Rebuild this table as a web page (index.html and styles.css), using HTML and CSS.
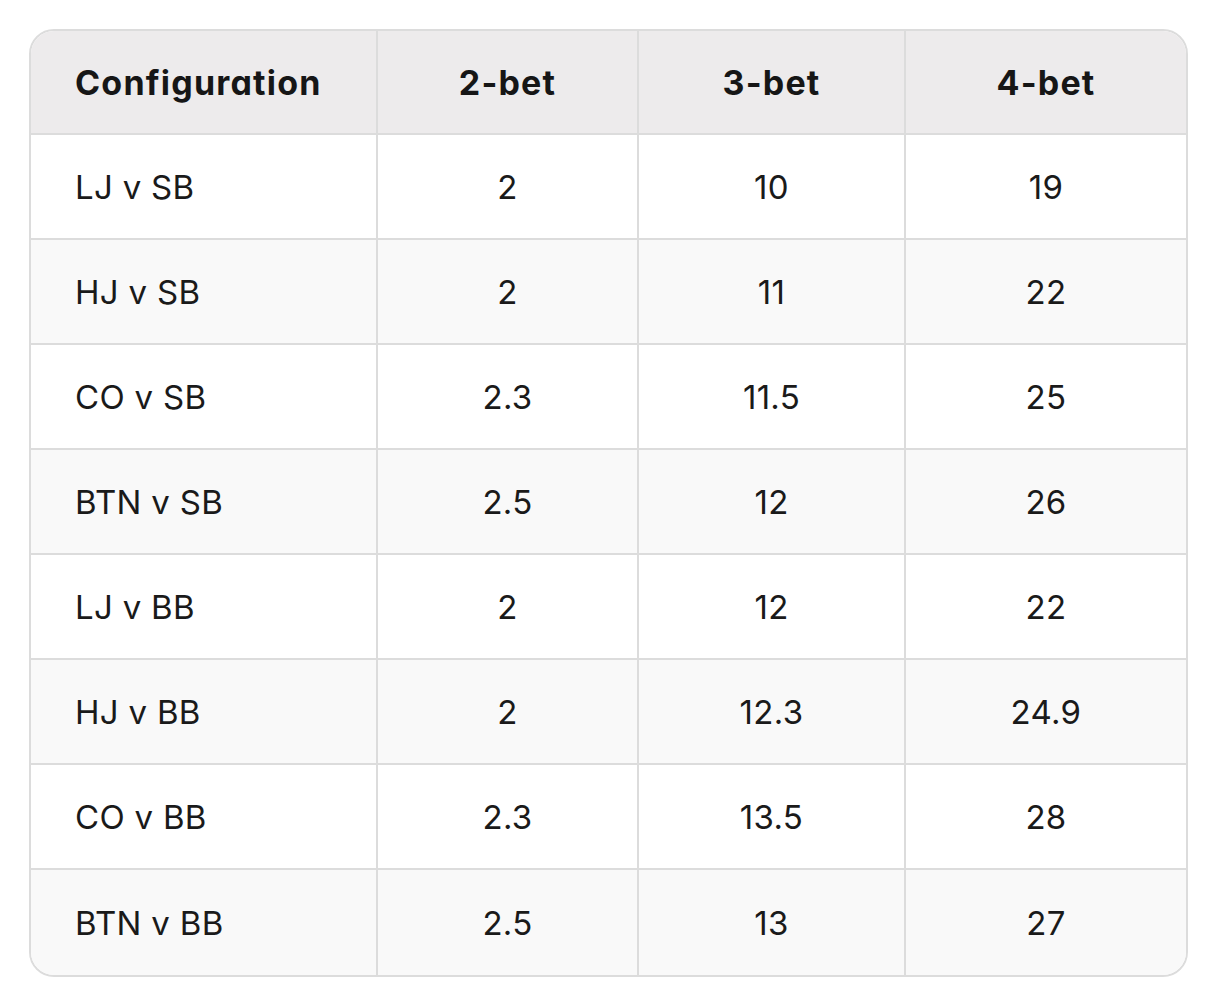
FILE: index.html
```html
<!DOCTYPE html>
<html lang="en">
<head>
<meta charset="utf-8">
<title>Bet sizes</title>
<link rel="stylesheet" href="styles.css">
</head>
<body>
<div class="page">
  <div class="table-wrap">
    <table class="sizes">
      <colgroup>
        <col class="c-config">
        <col class="c-two">
        <col class="c-three">
        <col class="c-four">
      </colgroup>
      <thead>
        <tr>
          <th class="left">Configuration</th>
          <th>2-bet</th>
          <th>3-bet</th>
          <th>4-bet</th>
        </tr>
      </thead>
      <tbody>
        <tr><td class="left">LJ v SB</td><td>2</td><td>10</td><td>19</td></tr>
        <tr><td class="left">HJ v SB</td><td>2</td><td>11</td><td>22</td></tr>
        <tr><td class="left">CO v SB</td><td>2.3</td><td>11.5</td><td>25</td></tr>
        <tr><td class="left">BTN v SB</td><td>2.5</td><td>12</td><td>26</td></tr>
        <tr><td class="left">LJ v BB</td><td>2</td><td>12</td><td>22</td></tr>
        <tr><td class="left">HJ v BB</td><td>2</td><td>12.3</td><td>24.9</td></tr>
        <tr><td class="left">CO v BB</td><td>2.3</td><td>13.5</td><td>28</td></tr>
        <tr><td class="left">BTN v BB</td><td>2.5</td><td>13</td><td>27</td></tr>
      </tbody>
    </table>
  </div>
</div>
</body>
</html>
```
FILE: styles.css
```css
html, body {
  margin: 0;
  padding: 0;
  background: #ffffff;
}

.page {
  padding: 29px 30px 29px 29px;
  font-family: Inter, "Noto Sans", sans-serif;
  font-feature-settings: "cv11";
  color: #1a1a1a;
}

.table-wrap {
  border: 2px solid #dcdcdc;
  border-radius: 25px;
  overflow: hidden;
}

.sizes {
  width: 100%;
  border-collapse: separate;
  border-spacing: 0;
  table-layout: fixed;
  font-size: 33px;
}

.c-config { width: 347px; }
.c-two { width: 261px; }
.c-three { width: 267px; }
.c-four { width: auto; }

.sizes th,
.sizes td {
  padding: 0;
  text-align: center;
  vertical-align: middle;
  border-right: 2px solid #dcdcdc;
  border-bottom: 2px solid #dcdcdc;
  box-sizing: border-box;
}

.sizes th:last-child,
.sizes td:last-child {
  border-right: none;
}

.sizes tbody tr:last-child td {
  border-bottom: none;
}

.sizes th {
  background: #edebec;
  font-weight: 700;
  font-size: 34px;
  letter-spacing: 1.2px;
  color: #161616;
  height: 104px;
}

.sizes td {
  font-weight: 400;
  letter-spacing: 0.3px;
  height: 105px;
}

.sizes tbody tr:nth-child(even) td {
  background: #f9f9f9;
}

.sizes .left {
  text-align: left;
  padding-left: 44px;
}
```
